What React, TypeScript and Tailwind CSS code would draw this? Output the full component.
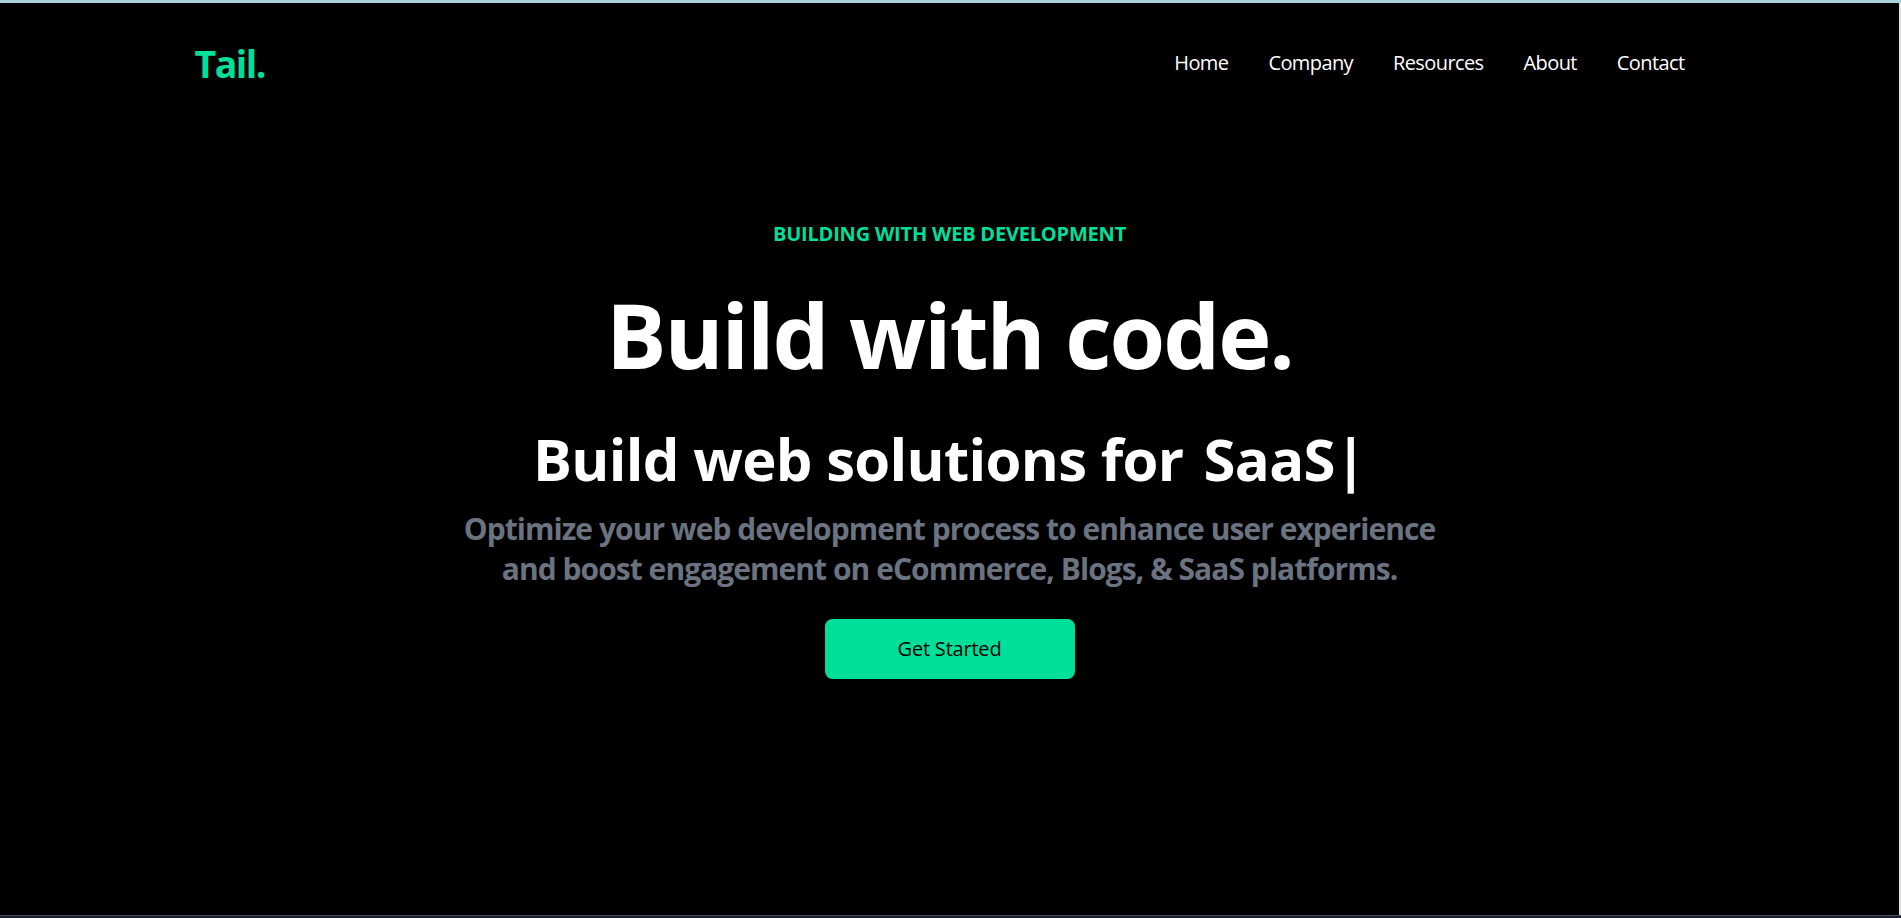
const navLinks = ["Home", "Company", "Resources", "About", "Contact"];

function Navbar() {
  return (
    <div className="flex justify-between items-center h-[120px] max-w-[1550px] w-full mx-auto px-5 text-white">
      <h1 className="w-full text-[37.5px] font-bold text-[#00df9a] tracking-[-0.04em] pt-[3px]">Tail.</h1>
      <ul className="flex">
        {navLinks.map((link) => (
          <li key={link} className="p-5 text-[20px] leading-[30px] tracking-[-0.03em]">
            {link}
          </li>
        ))}
      </ul>
    </div>
  );
}

function Hero() {
  return (
    <div className="text-white">
      <div className="max-w-[1000px] mt-[-120px] w-full h-[912px] mx-auto text-center flex flex-col justify-center">
        <p className="text-[#00df9a] font-bold p-[10px] text-[20px] leading-[30px] tracking-[-0.01em]">
          BUILDING WITH WEB DEVELOPMENT
        </p>
        <h1 className="text-[90px] leading-[90px] font-bold py-[30px] tracking-[-0.022em]">Build with code.</h1>
        <div className="flex justify-center items-center tracking-[-0.042em]">
          <p className="text-[58px] leading-[60px] font-bold py-5">Build web solutions for</p>
          <span className="text-[58px] leading-[60px] font-bold pl-5">
            SaaS<span>|</span>
          </span>
        </div>
        <p className="-mx-10 text-[30px] leading-[40px] font-bold text-[#6b7280] tracking-[-0.032em]">
          Optimize your web development process to enhance user experience
          <br />
          and boost engagement on eCommerce, Blogs, &amp; SaaS platforms.
        </p>
        <button className="bg-[#00df9a] w-[250px] rounded-[7.5px] font-medium my-[30px] mx-auto py-[15px] text-[20px] leading-[30px] text-black tracking-[-0.01em]">
          Get Started
        </button>
      </div>
    </div>
  );
}

export default function App() {
  return (
    <div className="h-[918px] w-full flex flex-col overflow-hidden bg-black font-[family-name:'Open_Sans','Noto_Sans',sans-serif]">
      <div className="h-[3px] bg-[#a9d1d7]" />
      <div className="flex-1 flex min-h-0">
        <main className="flex-1 bg-black overflow-hidden">
          <Navbar />
          <Hero />
        </main>
        <div className="w-[2px] bg-[#dfe3e6]" />
      </div>
      <div className="h-[1px] bg-[#4b5058]" />
      <div className="h-[2px] bg-[#1c2030]" />
    </div>
  );
}
